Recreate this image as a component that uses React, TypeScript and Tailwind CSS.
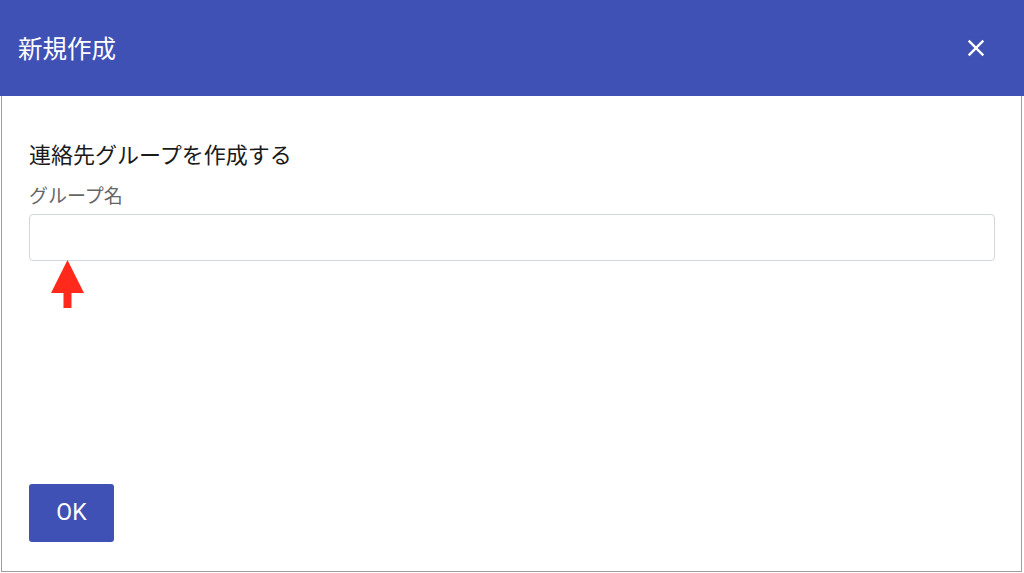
import React from 'react';
import { MdClose } from 'react-icons/md';

const App = () => {
    return (
        <div className="relative w-[1024px] h-[573px] bg-white" style={{ fontFamily: '"Noto Sans CJK JP", "Noto Sans", sans-serif' }}>
            {/* Header */}
            <div className="h-[96px] bg-[#3f51b5] flex items-center justify-between pl-[18px] pr-[34px]">
                <h1 className="text-white text-[24.5px] leading-[32px]">新規作成</h1>
                <button className="text-white">
                    <MdClose size={28} />
                </button>
            </div>

            {/* Body */}
            <div className="ml-[1px] w-[1021px] h-[476px] border-x border-b border-[#9e9e9e] flex flex-col px-[27px] pt-[43px] pb-[29px]">
                <h2 className="text-[22px] leading-[28px] text-[#1a1a1a]">連絡先グループを作成する</h2>
                <label className="mt-[16px] text-[19px] leading-[24px] text-[#666]">グループ名</label>
                <input
                    type="text"
                    className="mt-[7px] w-[966px] h-[47px] border border-[#d3d6db] rounded-[4px] px-3 outline-none"
                />
                <button
                    className="mt-auto w-[85px] h-[58px] bg-[#3f51b5] rounded-[3px] text-white text-[23px]"
                    style={{ fontFamily: 'Roboto, "Noto Sans", sans-serif' }}
                >
                    OK
                </button>
            </div>

            {/* Red annotation arrow */}
            <svg className="absolute left-[50px] top-[260px]" width="36" height="49" viewBox="0 0 36 49">
                <polygon points="17.5,0 1,33 34,33" fill="#ff2a1c" />
                <rect x="13.5" y="32" width="8" height="16" fill="#ff2a1c" />
            </svg>
        </div>
    );
};

export default App;
